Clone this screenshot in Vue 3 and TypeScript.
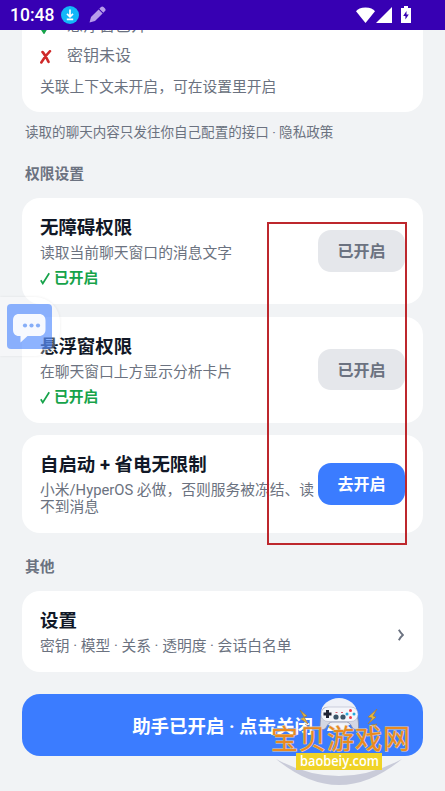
<script setup lang="ts">
interface Permission {
  title: string
  detail: string
  granted: boolean
}

const permissions: Permission[] = [
  { title: '无障碍权限', detail: '读取当前聊天窗口的消息文字', granted: true },
  { title: '悬浮窗权限', detail: '在聊天窗口上方显示分析卡片', granted: true },
  { title: '自启动 + 省电无限制', detail: '小米/HyperOS 必做，否则服务被冻结、读不到消息', granted: false },
]
</script>

<template>
  <div class="screen">
    <header class="statusbar">
      <span class="clock">10:48</span>
      <svg class="download" viewBox="0 0 18 18">
        <circle cx="9" cy="9" r="9" fill="#12b7f8" />
        <path d="M9 3.5v7M6 7.8l3 3 3-3M5.8 13.3h6.4" fill="none" stroke="#fff" stroke-width="1.7" />
      </svg>
      <svg class="pencil" viewBox="0 0 17 17">
        <path d="M.5 16.500l1.500-5.500L9.600 3.400l4 4L6 15z" fill="#b79bea" />
        <path d="M10.300 2.700l1.700-1.700a1.800 1.800 0 0 1 2.500 0l1.500 1.500a1.800 1.800 0 0 1 0 2.500l-1.700 1.700z" fill="#b79bea" />
      </svg>
      <svg class="wifi" viewBox="0 0 19 16">
        <path d="M0 4.3Q2.5.5 9.5.5T19 4.3L9.5 16z" fill="#fff" />
      </svg>
      <svg class="signal" viewBox="0 0 16 16"><path d="M16 0v16H0z" fill="#fff" /></svg>
      <svg class="battery" viewBox="0 0 10 17">
        <path d="M3 0h4v2h3v15H0V2h3z" fill="#fff" />
        <path d="M5.500 5L2.200 10h2.200v3.500L7.800 8.500H5.500z" fill="#3700b3" />
      </svg>
    </header>

    <main class="content">
      <section class="card summary">
        <div class="check-row">
          <svg class="mark" viewBox="0 0 12 14"><path d="M1 8l3 4.5L11 1" fill="none" stroke="#16a34a" stroke-width="2.2" /></svg>
          <span>悬浮窗已开</span>
        </div>
        <div class="check-row">
          <svg class="mark" viewBox="0 0 12 14">
            <path d="M2.500 2C5 4.500 7 9 8.600 12M10 1.200C7.200 4 4 8 1.300 12.500" fill="none" stroke="#cf2a2a" stroke-width="2.500" stroke-linecap="round" />
          </svg>
          <span>密钥未设</span>
        </div>
        <p class="note">关联上下文未开启，可在设置里开启</p>
      </section>

      <p class="privacy">读取的聊天内容只发往你自己配置的接口 · 隐私政策</p>

      <h2 class="label">权限设置</h2>
      <section class="permissions">
        <article v-for="item in permissions" :key="item.title" class="card row">
          <div class="info">
            <h3>{{ item.title }}</h3>
            <p class="detail">{{ item.detail }}</p>
            <p v-if="item.granted" class="granted">
              <svg viewBox="0 0 10 13"><path d="M.8 8.200l2 3.300L9.200 1.200" fill="none" stroke="#16a34a" stroke-width="1.700" /></svg>
              <span>已开启</span>
            </p>
          </div>
          <button :class="['action', { primary: !item.granted }]">{{ item.granted ? '已开启' : '去开启' }}</button>
        </article>
      </section>

      <h2 class="label other">其他</h2>
      <section class="card row settings">
        <div class="info">
          <h3>设置</h3>
          <p class="detail">密钥 · 模型 · 关系 · 透明度 · 会话白名单</p>
        </div>
        <svg class="chevron" viewBox="0 0 6 12"><path d="M.8.800Q2.600 4 4.900 6 2.600 8 .8 11.200" fill="none" stroke="#6b7280" stroke-width="1.900" /></svg>
      </section>

      <button class="toggle">助手已开启 · 点击关闭</button>
    </main>

    <div class="bubble">
      <svg viewBox="0 0 45 45">
        <rect width="45" height="45" rx="4" fill="#3b7cff" fill-opacity=".58" />
        <path d="M12 10h20c4 0 6.500 2.500 6.500 6.500v9c0 4-2.500 6.500-6.500 6.500H20.500l-7 6.500V32H12c-4 0-6-2.500-6-6.500v-9C6 12.500 8 10 12 10z" fill="#fff" fill-opacity=".92" />
        <g fill="#86aef8"><circle cx="18" cy="21.500" r="2.100" /><circle cx="24.500" cy="21.500" r="2.100" /><circle cx="31" cy="21.500" r="2.100" /></g>
      </svg>
    </div>

    <div class="frame"></div>

    <svg class="watermark" viewBox="0 0 150 96">
      <path d="M6 64Q69 116 132 64Q69 98 6 64z" fill="#c9cbd9" />
      <ellipse cx="69" cy="18" rx="18" ry="15" fill="#eef0f7" />
      <path d="M50 34C50 26 51 17 54 13h30c3 4 5 13 4.500 21-3 1.500-6 0-7-3-1-2-3-4-5-4H62c-2 0-4 2-5 4-1 3-4 4.500-7 3z" fill="#d4d7e3" stroke="#858aa5" stroke-width=".8" />
      <path d="M57 36q1-7 12-7t13 7z" fill="#f7f7fb" />
      <rect x="51" y="12" width="37" height="14.500" rx="7" fill="#f4f5fa" stroke="#a7abbf" stroke-width=".5" />
      <path d="M57.500 15v8M53.500 19h8" stroke="#202333" stroke-width="3" />
      <g fill="#3c5569"><circle cx="66" cy="22" r="2.600" /><circle cx="73" cy="22" r="2.600" /></g>
      <circle cx="80.500" cy="15.500" r="1.500" fill="#ee3f4b" /><circle cx="84" cy="19" r="1.500" fill="#25a9df" />
      <circle cx="80.500" cy="22.500" r="1.500" fill="#ee3f4b" /><circle cx="77" cy="19" r="1.500" fill="#25a9df" />
      <path d="M65.500 17.500h2M71 17.500h2" stroke="#d66070" />
      <path d="M30 15l7 6-3 1 4 7-7-5 3-2zM107 14l-9 8 4 1-4 6 8-7-3-1zM35 29l4 3M101 30l6-1-3 3" fill="#e9b838" stroke="#987847" stroke-width=".7" />
      <text x="1" y="54" textLength="139" class="wm-name">宝贝游戏网</text>
      <rect x="26" y="58" width="86" height="17" fill="#f0d326" />
      <text x="30" y="71" textLength="79" lengthAdjust="spacingAndGlyphs" class="wm-site">baobeiy.com</text>
    </svg>
  </div>
</template>

<style>
body { margin: 0; background: #f1f3f5; }
</style>

<style scoped>
.screen {
  position: relative;
  width: 445px;
  height: 791px;
  overflow: hidden;
  background: #f1f3f5;
  color: #6b7280;
  font-family: Roboto, "Noto Sans CJK SC", sans-serif;
  font-size: 14.77px;
}
h2, h3, p { margin: 0; }
button { border: 0; padding: 0; font-family: inherit; }
svg { display: block; flex: none; }
.statusbar {
  display: flex;
  align-items: center;
  box-sizing: border-box;
  height: 30px;
  padding: 0 34px 0 10px;
  background: #3700b3;
}
.clock { width: 51px; color: #fff; font-size: 17.5px; font-weight: 500; line-height: 32px; }
.download { width: 18px; height: 18px; }
.pencil { width: 17px; height: 17px; margin: 0 0 1px 10px; }
.wifi { width: 19px; height: 16px; margin-left: auto; }
.signal { width: 16px; height: 16px; margin-left: 1px; }
.battery { width: 10px; height: 17px; margin: 0 0 1px 9px; }
.content {
  display: flex;
  flex-direction: column;
  height: 761px;
  padding: 0 22px;
  overflow: hidden;
}
.card { box-sizing: border-box; border-radius: 18px; background: #fff; }
.summary {
  display: flex;
  flex-direction: column;
  justify-content: flex-end;
  flex: none;
  height: 82px;
  padding: 0 18px 15px;
  border-radius: 0 0 18px 18px;
  overflow: hidden;
}
.check-row {
  display: flex;
  align-items: center;
  flex: none;
  gap: 15px;
  height: 30px;
  font-size: 16px;
  line-height: 30px;
}
.mark { width: 12px; height: 14px; margin-top: 2px; }
.note { margin-top: 7px; line-height: 19px; }
.privacy { margin: 11px 3px 0; font-size: 13.55px; line-height: 18px; white-space: nowrap; }
.label { margin: 23px 3px 0; font-size: 14.77px; font-weight: 700; line-height: 20px; }
.permissions { display: flex; flex-direction: column; gap: 12.500px; margin-top: 14px; }
.row { display: flex; align-items: center; padding: 18px; }
.info { flex: 1; min-width: 0; }
h3 { color: #111827; font-size: 18.46px; font-weight: 700; line-height: 24px; }
.detail { margin: 5px 0 -1px; line-height: 17px; }
.granted {
  display: flex;
  align-items: center;
  gap: 4px;
  margin: 9px 0 -1px;
  color: #16a34a;
  font-weight: 700;
  line-height: 17px;
}
.granted svg { width: 10px; height: 13px; }
.action {
  flex: none;
  width: 87px;
  height: 41.500px;
  padding-bottom: 2px;
  border-radius: 13px;
  background: #e5e7eb;
  color: #6b7280;
  font-size: 16px;
  font-weight: 700;
}
.action.primary { background: #3b7cff; color: #fff; }
.other { margin-top: 24px; }
.settings { flex: none; margin-top: 14px; }
.chevron { width: 6px; height: 12px; margin: 6px 1px 0 0; }
.toggle {
  flex: none;
  height: 62px;
  margin-top: 22px;
  padding-bottom: 1px;
  border-radius: 18px;
  background: #3b7cff;
  color: #fff;
  font-size: 18.46px;
  font-weight: 700;
}
.bubble {
  position: absolute;
  top: 297px;
  left: 0;
  box-sizing: border-box;
  width: 60px;
  height: 59px;
  padding: 7px;
  border-radius: 0 25px 25px 0;
  background: rgba(255, 255, 255, .28);
  box-shadow: 0 0 3px rgba(0, 0, 0, .08);
}
.bubble svg { width: 45px; height: 45px; }
.frame {
  position: absolute;
  top: 222px;
  left: 267px;
  box-sizing: border-box;
  width: 140px;
  height: 323px;
  border: 2px solid #bd272d;
}
.watermark { position: absolute; top: 695px; left: 270px; width: 150px; height: 96px; }
.wm-name {
  fill: #e98a20;
  stroke: #e3cdb2;
  stroke-width: 1.200px;
  paint-order: stroke;
  font: 400 27px "Noto Sans CJK SC", sans-serif;
}
.wm-site { fill: #fff; font: 600 14.500px "Open Sans", sans-serif; }
</style>
